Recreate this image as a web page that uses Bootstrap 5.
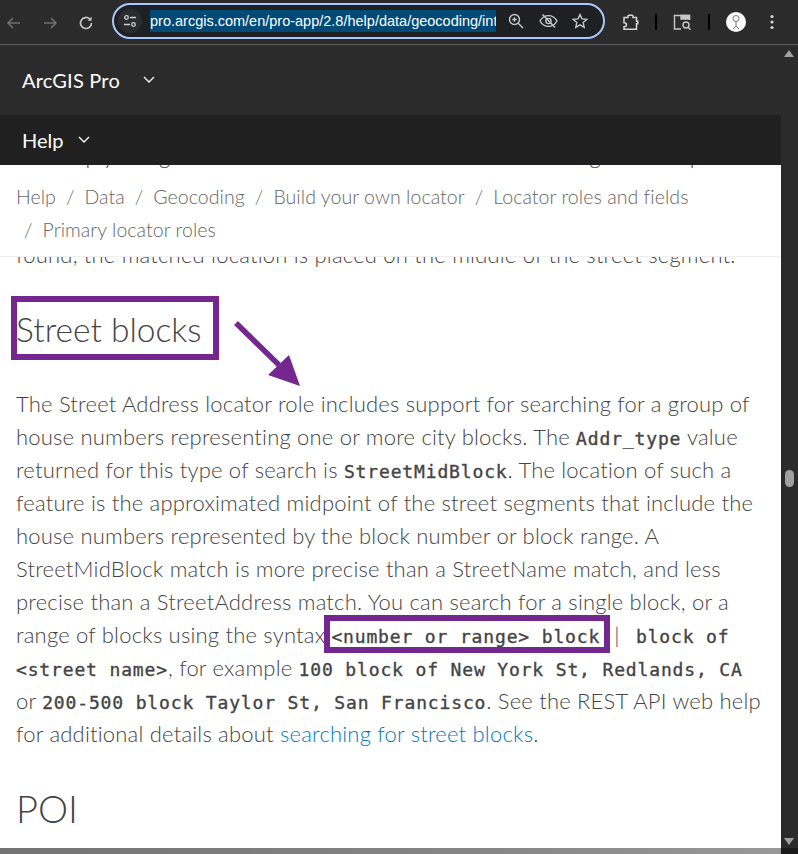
<!DOCTYPE html>
<html lang="en">
<head>
    <meta charset="UTF-8" />
    <title>Primary locator roles - ArcGIS Pro</title>
    <link href="https://cdn.jsdelivr.net/npm/bootstrap@5.3.0/dist/css/bootstrap.min.css" rel="stylesheet" />
    <style>
        body {
            margin: 0;
            width: 798px;
            height: 854px;
            overflow: hidden;
            background: #2b2b2b;
            font-family: Lato, "Liberation Sans", sans-serif;
        }
        /* browser chrome */
        .chrome-bar {
            height: 45px;
            background: #2b2b2b;
            border-bottom: 1px solid #5c5c5c;
            font-family: "Liberation Sans", sans-serif;
        }
        .chrome-btn { width: 36px; flex: none; padding-left: 5px; }
        .omnibox {
            position: absolute;
            left: 112px;
            top: 3px;
            width: 493px;
            height: 36px;
            background: #1f2023;
            border: 2px solid #a8c7fa;
            border-radius: 18px;
        }
        .site-chip {
            width: 24px;
            height: 24px;
            margin-left: 4px;
            border-radius: 50%;
            background: #2b2c2f;
        }
        .url-text {
            width: 346px;
            margin-left: 8px;
            height: 22px;
            line-height: 22px;
            background: #004a77;
            color: #fff;
            font-size: 14.5px;
            white-space: nowrap;
            overflow: hidden;
        }
        .sep-bar { width: 2px; height: 16px; background: #000; }
        .avatar-dot {
            width: 20px;
            height: 20px;
            border-radius: 50%;
            background: #fff;
        }
        /* site header */
        .site-top {
            height: 70px;
            background: #2b2b2b;
            color: #fff;
            font-size: 20px;
            letter-spacing: .2px;
            padding-left: 22px;
        }
        .site-help {
            height: 50px;
            background: #202020;
            color: #fff;
            font-size: 20px;
            padding-left: 22px;
            margin-right: 17px;
        }
        .site-body { height: 689px; }
        /* page */
        .doc-pane {
            width: 781px;
            height: 689px;
            background: #fff;
            color: #444;
        }
        .doc-flow {
            margin-top: -26px;
            padding-left: 16px;
            font-size: 22px;
            font-weight: 300;
            letter-spacing: .2px;
            line-height: 33px;
            white-space: nowrap;
        }
        .doc-flow p { margin: 0; }
        .doc-flow h2 {
            font-size: 33.500px;
            font-weight: 300;
            letter-spacing: 0;
            line-height: 40px;
            margin: 38px 0 38px;
        }
        .doc-flow h2.poi-head {
            font-size: 38px;
            margin: 38px 0 26px;
        }
        .doc-flow code {
            color: #444;
            font-family: "DejaVu Sans Mono", monospace;
            font-size: 18px;
            font-weight: 400;
            -webkit-text-stroke: .35px #444;
            letter-spacing: .85px;
            line-height: 1;
        }
        .doc-flow a { color: #007ac2; text-decoration: none; }
        .pipe-sep { margin: 0 10px 0 8px; }
        .crumbs {
            position: absolute;
            left: 0;
            top: 5px;
            width: 781px;
            height: 87px;
            background: #fff;
            border-bottom: 1px solid #eee;
            padding: 10px 16px 0;
            font-size: 19.500px;
            font-weight: 300;
            letter-spacing: .07px;
            line-height: 33px;
            color: #666;
        }
        .crumbs i { font-style: normal; margin: 0 10px; }
        .mark-box {
            position: absolute;
            border: 6px solid #74278f;
        }
        .mark-head { left: 11px; top: 131px; width: 208px; height: 64px; }
        .mark-code { left: 324px; top: 450px; width: 286px; height: 38px; }
        .mark-arrow { position: absolute; left: 230px; top: 150px; }
        /* scrollbar */
        .scroll-rail {
            width: 17px;
            height: 683px;
            background: #2b2b2b;
        }
        .scroll-up {
            position: absolute;
            right: 4px;
            top: 50px;
            width: 0;
            height: 0;
            border-left: 5px solid transparent;
            border-right: 5px solid transparent;
            border-bottom: 7px solid #a0a0a0;
        }
        .scroll-down {
            position: absolute;
            right: 4px;
            top: 838px;
            width: 0;
            height: 0;
            border-left: 5px solid transparent;
            border-right: 5px solid transparent;
            border-top: 7px solid #a0a0a0;
        }
        .scroll-thumb {
            position: absolute;
            right: 4px;
            top: 470px;
            width: 9px;
            height: 17px;
            border-radius: 5px;
            background: #a0a0a0;
        }
        .foot-strip {
            position: absolute;
            left: 0;
            top: 848px;
            width: 798px;
            height: 6px;
            background: linear-gradient(90deg, rgba(0,0,0,.55), rgba(0,0,0,.48) 60%, rgba(0,0,0,.4));
        }
    </style>
</head>
<body>

    <div class="chrome-bar d-flex align-items-center position-relative">
        <div class="chrome-btn"><svg width="18" height="18" viewBox="0 0 18 18" fill="none" stroke="#6f6f6f" stroke-width="1.6"><path d="M15 9H3M8 4 3 9l5 5"/></svg></div>
        <div class="chrome-btn"><svg width="18" height="18" viewBox="0 0 18 18" fill="none" stroke="#6f6f6f" stroke-width="1.6"><path d="M3 9h12M10 4l5 5-5 5"/></svg></div>
        <div class="chrome-btn"><svg width="18" height="18" viewBox="0 0 18 18" fill="none" stroke="#c7c7c7" stroke-width="1.7"><path d="M14.5 9A5.5 5.5 0 1 1 12.8 5"/><path d="M14.6 2.8v4h-4" fill="#c7c7c7" stroke="none"/></svg></div>

        <div class="omnibox d-flex align-items-center">
            <div class="site-chip d-flex align-items-center justify-content-center">
                <svg width="14" height="14" viewBox="0 0 14 14" fill="none" stroke="#d0d0d0" stroke-width="1.3"><circle cx="3.5" cy="3.5" r="1.8"/><path d="M7 3.5h6M1 10.5h6"/><circle cx="10.5" cy="10.5" r="1.8"/></svg>
            </div>
            <div class="url-text">pro.arcgis.com/en/pro-app/2.8/help/data/geocoding/introduction</div>
            <svg class="ms-auto" style="margin-right:15px" width="16" height="16" viewBox="0 0 16 16" fill="none" stroke="#c7c7c7" stroke-width="1.4"><circle cx="6.5" cy="6.5" r="5"/><path d="M10.2 10.2 15 15M4.3 6.5h4.4M6.5 4.3v4.4"/></svg>
            <svg style="margin-right:14px" width="19" height="16" viewBox="0 0 19 16" fill="none" stroke="#c7c7c7" stroke-width="1.4"><path d="M1 8c2-3.6 5-5.4 8.500-5.400S16 4.400 18 8c-2 3.600-5 5.400-8.500 5.400S3 11.600 1 8Z"/><circle cx="9.500" cy="8" r="2.600"/><path d="M3.500 1.500l12.500 13"/></svg>
            <svg style="margin-right:15px" width="16" height="16" viewBox="0 0 16 16" fill="none" stroke="#c7c7c7" stroke-width="1.400"><path d="m8 1.500 2 4.400 4.700.5-3.500 3.200 1 4.700L8 11.900 3.800 14.300l1-4.700L1.300 6.400 6 5.900Z"/></svg>
        </div>

        <div class="position-absolute d-flex align-items-center" style="left:622px;top:12px">
            <svg width="17" height="17" viewBox="0 0 17 17" fill="none" stroke="#d6d6d6" stroke-width="1.500"><path d="M6 3.500V2.200c0-.6.4-1 1-1h3c.6 0 1 .4 1 1v1.300h3.500v3.700h1.300v2.600h-1.300v5.400H2v-2.500c1.500 0 2.500-.8 2.500-2S3.500 8.700 2 8.700V3.500Z"/></svg>
            <div class="sep-bar ms-3"></div>
            <svg class="ms-3" width="19" height="17" viewBox="0 0 19 17" fill="none" stroke="#c7c7c7" stroke-width="1.400"><path d="M8 15H1.500V1.500h15V6"/><path d="M8 1.500h8.500V5H8Z" fill="#c7c7c7"/><circle cx="13" cy="11" r="3"/><path d="m15 13.200 2.500 2.500"/></svg>
            <div class="sep-bar ms-3"></div>
            <div class="avatar-dot ms-3 d-flex align-items-center justify-content-center">
                <svg width="12" height="16" viewBox="0 0 12 16" fill="none" stroke="#777" stroke-width="1"><circle cx="6" cy="4.500" r="3"/><path d="M6 7.500V12M3 15l3-3 3 3"/></svg>
            </div>
            <svg style="margin-left:24px" width="4" height="16" viewBox="0 0 4 16" fill="#d6d6d6"><circle cx="2" cy="2.500" r="1.600"/><circle cx="2" cy="8" r="1.600"/><circle cx="2" cy="13.500" r="1.600"/></svg>
        </div>
    </div>

    <div class="site-top d-flex align-items-center">
        <span>ArcGIS Pro</span>
        <svg style="margin-left:23px" width="12" height="8" viewBox="0 0 12 8" fill="none" stroke="#fff" stroke-width="1.300"><path d="m1 1 5 5 5-5"/></svg>
    </div>
    <div class="site-help d-flex align-items-center">
        <span>Help</span>
        <svg style="margin-left:15px" width="12" height="8" viewBox="0 0 12 8" fill="none" stroke="#fff" stroke-width="1.300"><path d="m1 1 5 5 5-5"/></svg>
    </div>

    <div class="site-body d-flex">
        <div class="doc-pane position-relative overflow-hidden">
            <div class="doc-flow">
                <p>To comply using the house number the street is then missing at the top</p>
                <p>&nbsp;</p>
                <p>&nbsp;</p>
                <p>found, the matched location is placed on the middle of the street segment.</p>

                <h2>Street blocks</h2>

                <p>The Street Address locator role includes support for searching for a group of<br>
                house numbers representing one or more city blocks. The <code>Addr_type</code> value<br>
                returned for this type of search is <code>StreetMidBlock</code>. The location of such a<br>
                feature is the approximated midpoint of the street segments that include the<br>
                house numbers represented by the block number or block range. A<br>
                StreetMidBlock match is more precise than a StreetName match, and less<br>
                precise than a StreetAddress match. You can search for a single block, or a<br>
                range of blocks using the syntax <code>&lt;number or range&gt; block</code><span class="pipe-sep"> | </span><code>block of</code><br>
                <code>&lt;street name&gt;</code>, for example <code>100 block of New York St, Redlands, CA</code><br>
                or <code>200-500 block Taylor St, San Francisco</code>. See the REST API web help<br>
                for additional details about <a href="#">searching for street blocks</a>.</p>

                <h2 class="poi-head">POI</h2>
                <p>be acceptable as a place name</p>
            </div>

            <nav class="crumbs">
                Help<i>/</i>Data<i>/</i>Geocoding<i>/</i>Build your own locator<i>/</i>Locator roles and fields<br>
                <i class="ms-2">/</i>Primary locator roles
            </nav>

            <div class="mark-box mark-head"></div>
            <div class="mark-box mark-code"></div>
            <svg class="mark-arrow" width="78" height="76" viewBox="0 0 78 76">
                <path d="M6 8 49 50" stroke="#74278f" stroke-width="5.500" fill="none"/>
                <path d="M70 71 38 60 59 40Z" fill="#74278f"/>
            </svg>
        </div>
        <div class="scroll-rail"></div>
    </div>

    <div class="scroll-up"></div>
    <div class="scroll-thumb"></div>
    <div class="scroll-down"></div>
    <div class="foot-strip"></div>

    <script src="https://cdn.jsdelivr.net/npm/bootstrap@5.3.0/dist/js/bootstrap.bundle.min.js"></script>
</body>
</html>
